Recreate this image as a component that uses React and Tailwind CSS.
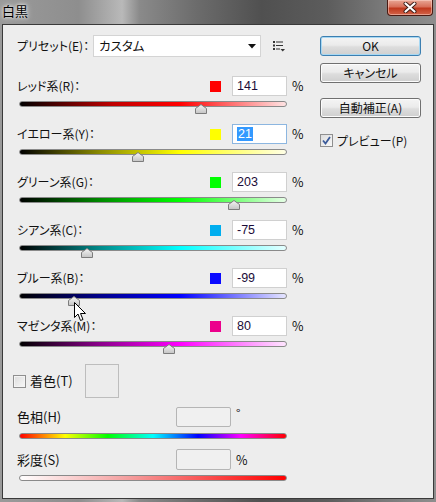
import React from 'react';

const rows = [
  { label: 'レッド系(R)：', swatch: 'bg-[#ff0000]', value: 141, track: 'bg-[linear-gradient(to_right,#000_0%,#c00000_35%,#ff0000_60%,#ffe4e4_100%)]' },
  { label: 'イエロー系(Y)：', swatch: 'bg-[#ffff00]', value: 21, selected: true, track: 'bg-[linear-gradient(to_right,#000_0%,#8a8a00_30%,#ffff00_60%,#ffffe6_100%)]' },
  { label: 'グリーン系(G)：', swatch: 'bg-[#00ff00]', value: 203, track: 'bg-[linear-gradient(to_right,#000_0%,#008a00_30%,#00ff00_60%,#e6ffe6_100%)]' },
  { label: 'シアン系(C)：', swatch: 'bg-[#00aeef]', value: -75, track: 'bg-[linear-gradient(to_right,#000_0%,#008a8a_30%,#00ffff_60%,#e6ffff_100%)]' },
  { label: 'ブルー系(B)：', swatch: 'bg-[#0a0aff]', value: -99, cursor: true, track: 'bg-[linear-gradient(to_right,#000_0%,#00008a_30%,#0000ff_60%,#e6e6ff_100%)]' },
  { label: 'マゼンタ系(M)：', swatch: 'bg-[#ec008c]', value: 80, track: 'bg-[linear-gradient(to_right,#000_0%,#8a008a_30%,#ff00ff_60%,#ffe6ff_100%)]' },
];

function Thumb({ value }) {
  const pct = ((value + 200) / 500) * 100;
  return (
    <svg
      className="absolute top-[2px] -translate-x-1/2"
      style={{ left: `${pct}%` }}
      width="12"
      height="10"
      viewBox="0 0 12 10"
    >
      <defs>
        <linearGradient id="thumbg" x1="0" y1="0" x2="0" y2="1">
          <stop offset="0" stopColor="#f6f6f6" />
          <stop offset="1" stopColor="#c4c4c4" />
        </linearGradient>
      </defs>
      <path d="M6 0.5 L11.5 4.5 L11.5 9.5 L0.5 9.5 L0.5 4.5 Z" fill="url(#thumbg)" stroke="#7c7c7c" strokeLinejoin="round" />
    </svg>
  );
}

function Cursor() {
  return (
    <svg className="absolute left-[54px] top-[8px] z-10" width="13" height="20" viewBox="0 0 13 20">
      <path d="M0.5 0.5 L0.5 15.5 L4 12 L6.5 18.5 L9 17.5 L6.5 11.5 L11.5 11.5 Z" fill="#fff" stroke="#000" strokeLinejoin="round" />
    </svg>
  );
}

function Button({ children, primary, className = '' }) {
  return (
    <div
      className={`h-[20px] flex items-center justify-center rounded-[3px] border text-[12px] leading-none text-[#111] bg-[linear-gradient(to_bottom,#f4f4f4_0%,#ebebeb_45%,#dddddd_55%,#cfcfcf_100%)] ${
        primary ? 'border-[#3c7fb1] shadow-[inset_0_0_0_1px_#a7d8f3]' : 'border-[#707070] shadow-[inset_0_0_0_1px_#fcfcfc]'
      } ${className}`}
    >
      {children}
    </div>
  );
}

export default function App() {
  return (
    <div className="w-[436px] h-[502px] flex flex-col overflow-hidden font-['Noto_Sans_CJK_JP','Liberation_Sans',sans-serif] [font-feature-settings:'palt'] bg-[linear-gradient(90deg,#9a9a9a_0%,#8e8e8e_18%,#b9b9b9_28%,#8a8a8a_32%,#6c6c6c_45%,#505050_60%,#5c5c5c_75%,#7a7a7a_88%,#8e8e8e_100%)]">
      {/* Title bar */}
      <div className="h-[24px] flex items-start shrink-0">
        <span className="ml-[2px] mt-[3px] text-[13px] leading-[16px] text-black [text-shadow:0_0_6px_#fff,0_0_3px_#fff]">白黒</span>
        <div className="ml-auto mr-[3px] w-[46px] h-[16px] flex items-center justify-center rounded-b-[4px] border border-t-0 border-[#4a1a12] bg-[linear-gradient(to_bottom,#e9a795_0%,#d8705a_45%,#c0391e_55%,#d2644a_100%)] shadow-[inset_0_0_0_1px_rgba(255,220,210,0.5)]">
          <svg width="14" height="11" viewBox="0 0 14 11">
            <path d="M2.5 1.5 L11.5 9.5 M11.5 1.5 L2.5 9.5" stroke="#3a1a14" strokeWidth="4" strokeLinecap="round" />
            <path d="M2.5 1.5 L11.5 9.5 M11.5 1.5 L2.5 9.5" stroke="#fff" strokeWidth="2.2" strokeLinecap="round" />
          </svg>
        </div>
      </div>

      {/* Body */}
      <div className="flex-1 mx-[2px] mb-[3px] border border-[#3a3a3a] bg-[#ededed] flex text-[12px] leading-[14px] text-[#111]">
        {/* Left column */}
        <div className="w-[317px] pl-[14px] pt-[10px] flex flex-col">
          {/* Preset */}
          <div className="flex items-center h-[22px]">
            <span className="w-[76px] shrink-0 whitespace-nowrap">プリセット(E)：</span>
            <div className="w-[168px] h-[22px] bg-white border border-[#d4d4d4] flex items-center pl-[5px] pr-[4px]">
              <span className="flex-1 text-[12.5px]">カスタム</span>
              <svg width="8" height="5" viewBox="0 0 8 5">
                <path d="M0 0 L8 0 L4 4.5 Z" fill="#111" />
              </svg>
            </div>
            <svg className="ml-[12px]" width="12" height="11" viewBox="0 0 12 11">
              <rect x="0" y="0" width="2" height="2" fill="#333" />
              <rect x="3" y="0.5" width="7" height="1" fill="#333" />
              <rect x="0" y="3.5" width="2" height="2" fill="#333" />
              <rect x="3" y="4" width="7" height="1" fill="#333" />
              <rect x="0" y="7" width="2" height="2" fill="#333" />
              <rect x="3" y="7.5" width="4" height="1" fill="#333" />
              <path d="M7.5 8 L12 8 L9.75 10.5 Z" fill="#333" />
            </svg>
          </div>

          {/* Sliders */}
          <div className="mt-[19px] flex flex-col gap-[17px]">
            {rows.map((r) => (
              <div key={r.label} className="flex flex-col">
                <div className="flex items-center h-[20px]">
                  <span className="w-[193px] whitespace-nowrap">{r.label}</span>
                  <div className={`w-[11px] h-[11px] ${r.swatch}`} />
                  <div
                    className={`ml-[11px] w-[55px] h-[20px] bg-white border flex items-center pl-[4px] text-[12.5px] font-['Liberation_Sans',sans-serif] text-[#1b0c38] ${
                      r.selected ? 'border-[#8cb6e0]' : 'border-[#d0d0d0]'
                    }`}
                  >
                    {r.selected ? <span className="bg-[#3399ff] text-white px-[1px]">{r.value}</span> : r.value}
                  </div>
                  <span className="ml-[5px] text-[12.5px]">%</span>
                </div>
                <div className={`relative ml-[2px] mt-[5px] w-[268px] h-[6px] rounded-full border border-[#8a8a8a] ${r.track}`}>
                  <Thumb value={r.value} />
                  {r.cursor && <Cursor />}
                </div>
              </div>
            ))}
          </div>

          {/* Tint */}
          <div className="mt-[17px] flex items-center h-[34px]">
            <div className="-ml-[4px] w-[13px] h-[13px] border border-[#8f8f8f] bg-[linear-gradient(135deg,#dcdcdc,#f8f8f8)] shadow-[inset_0_0_0_1px_#f4f4f4]" />
            <span className="ml-[4px] w-[55px] text-[13px]">着色(T)</span>
            <div className="w-[34px] h-[34px] border border-[#bdbdbd] bg-[#ececec]" />
          </div>

          <div className="mt-[9px] flex items-center h-[20px]">
            <span className="w-[159px] text-[13px]">色相(H)</span>
            <div className="w-[55px] h-[20px] border border-[#b5b5b5] rounded-[2px] bg-[#f0f0f0]" />
            <span className="ml-[5px] self-start text-[12px] leading-[12px]">°</span>
          </div>
          <div className="ml-[2px] mt-[6px] w-[268px] h-[6px] rounded-full border border-[#8a8a8a] bg-[linear-gradient(to_right,#ff0000_0%,#ffff00_17%,#00ff00_33%,#00ffff_50%,#0000ff_67%,#ff00ff_83%,#ff0000_100%)]" />

          <div className="mt-[10px] flex items-center h-[21px]">
            <span className="w-[159px] text-[13px]">彩度(S)</span>
            <div className="w-[55px] h-[21px] border border-[#b5b5b5] rounded-[2px] bg-[#f0f0f0]" />
            <span className="ml-[5px] text-[12.5px]">%</span>
          </div>
          <div className="ml-[2px] mt-[5px] w-[268px] h-[6px] rounded-full border border-[#8a8a8a] bg-[linear-gradient(to_right,#ffffff_0%,#f4a0a0_40%,#ff0000_100%)]" />
        </div>

        {/* Right column */}
        <div className="w-[101px] pt-[11px] flex flex-col">
          <Button primary>OK</Button>
          <Button className="mt-[7px]">キャンセル</Button>
          <Button className="mt-[15px]">自動補正(A)</Button>
          <div className="mt-[16px] flex items-center h-[13px]">
            <div className="w-[13px] h-[13px] border border-[#8f8f8f] bg-[linear-gradient(135deg,#dcdcdc,#f8f8f8)] flex items-center justify-center">
              <svg width="9" height="9" viewBox="0 0 9 9">
                <path d="M1 4.5 L3.5 7.5 L8 1" fill="none" stroke="#3a5a9a" strokeWidth="1.8" />
              </svg>
            </div>
            <span className="ml-[4px]">プレビュー(P)</span>
          </div>
        </div>
      </div>
    </div>
  );
}
